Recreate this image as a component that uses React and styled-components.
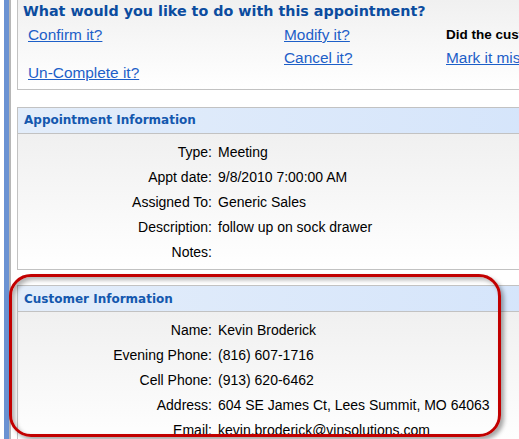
import React from "react";
import styled, { createGlobalStyle } from "styled-components";

const Global = createGlobalStyle`
  html, body { margin: 0; padding: 0; width: 519px; height: 439px; overflow: hidden; background: #fff; }
  body { font-family: "Liberation Sans", Arial, sans-serif; }
`;

const Page = styled.div`
  position: relative;
  display: flex;
  align-items: flex-start;
  width: 519px;
  height: 439px;
  overflow: hidden;
  padding-left: 4px;
  box-sizing: border-box;
`;

const Rail = styled.div`
  flex: none;
  align-self: stretch;
  width: 0;
  border-left: 5px solid #6a92d2;
  border-right: 2px solid #b6b6b6;
`;

const Content = styled.div`
  flex: none;
  width: 640px;
  padding-left: 6px;
  display: flex;
  flex-direction: column;
`;

const Panel = styled.section`
  flex: none;
  border: 1px solid #c2c2c2;
  border-top-width: ${(p) => (p.$open ? "0" : "1px")};
  margin-bottom: ${(p) => p.$mb || 0}px;
  background: linear-gradient(to bottom, #ededed, #ffffff);
`;

const ActionPanel = styled(Panel)`
  padding: 0 0 0 5px;
  height: 90px;
  box-sizing: border-box;
  background: linear-gradient(to bottom, #f0f0f0, #ffffff);
`;

const Title = styled.h1`
  margin: 0;
  padding-top: 1px;
  font-family: "DejaVu Sans", Verdana, sans-serif;
  font-weight: bold;
  font-size: 14.3px;
  line-height: 20px;
  color: #0b4c9f;
  white-space: nowrap;
`;

const Actions = styled.div`
  display: grid;
  grid-template-columns: 256px 162px auto;
  padding: 2px 0 0 5px;
`;

const ActionCol = styled.div`
  display: flex;
  flex-direction: column;
  gap: ${(p) => p.$gap || 0}px;
`;

const ActionLink = styled.a`
  font-size: 15.4px;
  line-height: 23px;
  color: #1d5fc8;
  text-decoration: underline;
  white-space: nowrap;
  cursor: pointer;
`;

const Question = styled.div`
  font-size: 13.5px;
  font-weight: bold;
  line-height: 23px;
  color: #000;
  white-space: nowrap;
`;

const Header = styled.div`
  height: 25px;
  border-bottom: 1px solid #c2c2c2;
  background: linear-gradient(to right, #e3edfa, #d2e3fb);
  padding-left: 6px;
  font-family: "DejaVu Sans", Verdana, sans-serif;
  font-weight: bold;
  font-size: 12px;
  line-height: ${(p) => p.$lh || 25}px;
  color: #1458ae;
`;

const Rows = styled.dl`
  margin: 0;
  padding: 5px 0 5px;
  display: grid;
  grid-template-columns: 194px 1fr;
  column-gap: 6px;
  grid-auto-rows: 25px;
  align-items: center;
  font-size: 14px;
  color: #000;
`;

const Label = styled.dt`
  text-align: right;
  white-space: nowrap;
`;

const Value = styled.dd`
  margin: 0;
  white-space: nowrap;
`;

const Callout = styled.div`
  position: absolute;
  left: 9px;
  top: 274px;
  width: 492px;
  height: 163px;
  box-sizing: border-box;
  border: 3.5px solid #c20000;
  border-radius: 22px;
  box-shadow: 3px 3px 4px rgba(0, 0, 0, 0.35), inset 3px 3px 4px rgba(0, 0, 0, 0.3);
  pointer-events: none;
`;

const appointment = [
  ["Type:", "Meeting"],
  ["Appt date:", "9/8/2010 7:00:00 AM"],
  ["Assigned To:", "Generic Sales"],
  ["Description:", "follow up on sock drawer"],
  ["Notes:", ""],
];

const customer = [
  ["Name:", "Kevin Broderick"],
  ["Evening Phone:", "(816) 607-1716"],
  ["Cell Phone:", "(913) 620-6462"],
  ["Address:", "604 SE James Ct, Lees Summit, MO 64063"],
  ["Email:", "kevin.broderick@vinsolutions.com"],
];

function InfoRows({ data }) {
  return (
    <Rows>
      {data.map(([k, v]) => (
        <React.Fragment key={k}>
          <Label>{k}</Label>
          <Value>{v}</Value>
        </React.Fragment>
      ))}
    </Rows>
  );
}

export default function App() {
  return (
    <>
      <Global />
      <Page>
        <Rail />
        <Content>
          <ActionPanel $open $mb={17}>
            <Title>What would you like to do with this appointment?</Title>
            <Actions>
              <ActionCol $gap={15}>
                <ActionLink>Confirm it?</ActionLink>
                <ActionLink>Un-Complete it?</ActionLink>
              </ActionCol>
              <ActionCol>
                <ActionLink>Modify it?</ActionLink>
                <ActionLink>Cancel it?</ActionLink>
              </ActionCol>
              <ActionCol>
                <Question>Did the customer show?</Question>
                <ActionLink>Mark it missed?</ActionLink>
              </ActionCol>
            </Actions>
          </ActionPanel>
          <Panel $mb={15}>
            <Header>Appointment Information</Header>
            <InfoRows data={appointment} />
          </Panel>
          <Panel>
            <Header $lh={27}>Customer Information</Header>
            <InfoRows data={customer} />
          </Panel>
        </Content>
        <Callout />
      </Page>
    </>
  );
}
